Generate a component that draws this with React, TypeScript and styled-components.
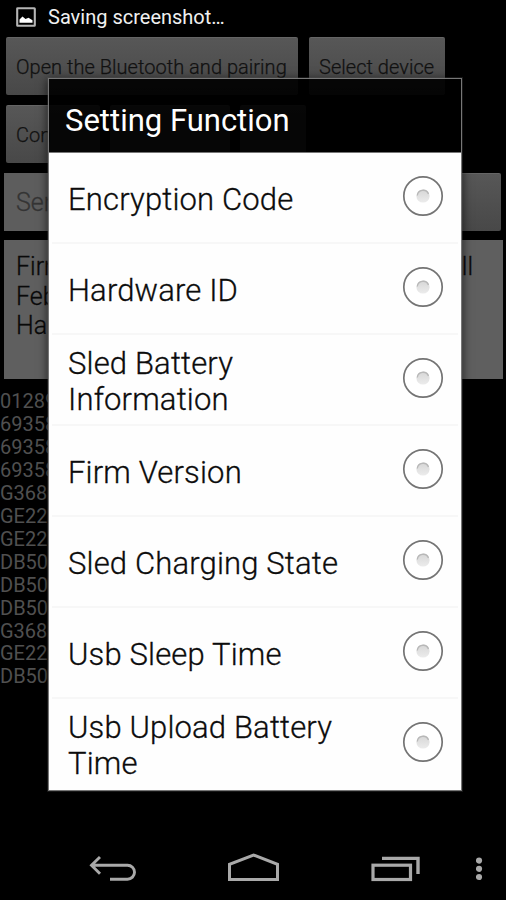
import React from "react";
import styled, { createGlobalStyle } from "styled-components";

const GlobalStyle = createGlobalStyle`
  * { box-sizing: border-box; }
  body { margin: 0; background: #000; font-family: Roboto, "Liberation Sans", sans-serif; }
`;

const Screen = styled.div`
  position: relative;
  width: 506px;
  height: 900px;
  overflow: hidden;
  background: #000;
  display: flex;
  flex-direction: column;
`;

const StatusBar = styled.header`
  height: 37px;
  flex: none;
  display: flex;
  align-items: center;
  gap: 12px;
  padding: 0 0 3px 16px;
  color: #f0f0f0;
  font-size: 20px;
`;

const Page = styled.main`
  flex: 1;
  display: flex;
  flex-direction: column;
`;

const ButtonRow = styled.div<{ $height: number; $left: number; $gap: number; $below: number }>`
  display: flex;
  flex: none;
  height: ${(p) => p.$height}px;
  gap: ${(p) => p.$gap}px;
  margin-bottom: ${(p) => p.$below}px;
  padding-left: ${(p) => p.$left}px;
`;

const GreyButton = styled.div<{ $width: number }>`
  width: ${(p) => p.$width}px;
  height: 58px;
  flex: none;
  display: flex;
  align-items: center;
  padding: 0 0 0 10px;
  border-top: 1px solid #656565;
  border-radius: 2px;
  background: linear-gradient(#575757, #484848);
  color: #121212;
  font-size: 20px;
  letter-spacing: 0.03px;
  font-weight: 300;
  -webkit-text-stroke: 0.25px #121212;
  white-space: nowrap;
  overflow: hidden;
`;

const SendField = styled.div`
  width: 360px;
  height: 58px;
  flex: none;
  padding: 15px 0 0 12px;
  background: #5d5d5d;
  color: #343434;
  font-size: 25px;
  line-height: 29px;
  font-weight: 300;
  -webkit-text-stroke: 0.3px #343434;
`;

const Output = styled.div`
  flex: none;
  width: 499px;
  height: 139px;
  margin-left: 4px;
  padding: 12px 30px 0 12px;
  background: #5f5f5f;
  color: #090909;
  font-size: 25px;
  line-height: 29.6px;
  font-weight: 300;
  -webkit-text-stroke: 0.3px #090909;
`;

const OutputLine = styled.div`
  display: flex;
  justify-content: space-between;
`;

const ScanList = styled.ul`
  list-style: none;
  margin: 11px 0 0;
  padding: 0;
  color: #505050;
  font-size: 20px;
  line-height: 22.95px;
  font-weight: 400;
`;

const Dialog = styled.section`
  position: absolute;
  left: 48px;
  top: 78px;
  width: 414px;
  height: 713px;
  display: flex;
  flex-direction: column;
  border: 1px solid #777;
  outline: 1px solid rgba(90, 90, 90, 0.25);
  box-shadow: 0 2px 9px 1px rgba(0, 0, 0, 0.6);
`;

const DialogTitle = styled.h1`
  margin: 0;
  height: 74px;
  flex: none;
  display: flex;
  align-items: center;
  padding: 10px 0 0 16px;
  border-bottom: 1px solid #777;
  background: rgba(0, 0, 0, 0.92);
  color: #fff;
  font-size: 31px;
  font-weight: 400;
`;

const Options = styled.div`
  flex: 1;
  background: #fefefe;
`;

const Option = styled.div`
  height: 91px;
  margin: 0 3px;
  padding: 0 14px 0 16px;
  display: flex;
  align-items: center;
  justify-content: space-between;
  border-bottom: 2px solid #f7f7f7;
  &:last-child { border-bottom: 0; height: 89px; }
`;

const Label = styled.span`
  width: 300px;
  padding-top: 5px;
  color: #0c0c0c;
  font-size: 31px;
  letter-spacing: 0.16px;
  line-height: 36px;
  font-weight: 300;
  -webkit-text-stroke: 0.3px #0c0c0c;
`;

const Radio = styled.svg`
  flex: none;
  display: block;
  margin-bottom: 3px;
`;

const NavBar = styled.nav`
  position: absolute;
  left: 0;
  bottom: 0;
  width: 506px;
  height: 62px;
  display: flex;
  align-items: center;
  padding-left: 88px;
`;

const NavIcon = styled.svg<{ $after: number }>`
  flex: none;
  display: block;
  margin-right: ${(p) => p.$after}px;
`;

const options = [
  "Encryption Code", "Hardware ID", "Sled Battery Information", "Firm Version",
  "Sled Charging State", "Usb Sleep Time", "Usb Upload Battery Time",
];

const scans = [
  "01289", "69358", "69358", "69358", "G368", "GE22", "GE22",
  "DB50", "DB50", "DB50", "G368", "GE22", "DB50",
];

function RadioMark() {
  return (
    <Radio width="42" height="42" viewBox="0 0 42 42">
      <defs>
        <linearGradient id="dot" x1="0" y1="0" x2="0" y2="1">
          <stop offset="0" stopColor="#d6d6d6" />
          <stop offset="1" stopColor="#ececec" />
        </linearGradient>
      </defs>
      <circle cx="21" cy="21" r="19.2" fill="#fff" stroke="#747474" strokeWidth="1.7" />
      <circle cx="21" cy="21" r="6.6" fill="url(#dot)" />
      <path d="M15.3 20.5A5.8 5.8 0 0 1 26.5 19" fill="none" stroke="#b8b8b8" strokeWidth="1.3" />
    </Radio>
  );
}

export default function App() {
  return (
    <Screen>
      <GlobalStyle />
      <StatusBar>
        <svg width="20" height="20" viewBox="0 0 20 20">
          <rect x="1.2" y="1.2" width="17.6" height="17.6" rx="0.5" fill="none" stroke="#b5b5b5" strokeWidth="2.1" />
          <path d="M3.5 15.8V12.5L6.5 9.5L9.5 12L12.5 10.7L16.5 13.2V15.8Z" fill="#fff" />
        </svg>
        <span>Saving screenshot…</span>
      </StatusBar>
      <Page>
        <ButtonRow $height={58} $left={6} $gap={11} $below={10}>
          <GreyButton $width={292}>Open the Bluetooth and pairing</GreyButton>
          <GreyButton $width={136}>Select device</GreyButton>
        </ButtonRow>
        <ButtonRow $height={58} $left={6} $gap={10} $below={10}>
          <GreyButton $width={94}>Con</GreyButton>
          <GreyButton $width={120} />
          <GreyButton $width={66} />
        </ButtonRow>
        <ButtonRow $height={57} $left={4} $gap={6} $below={10}>
          <SendField>Sen</SendField>
          <GreyButton $width={131} />
        </ButtonRow>
        <Output>
          <OutputLine><span>Firm</span><span>ll</span></OutputLine>
          <OutputLine>Feb</OutputLine>
          <OutputLine>Har</OutputLine>
        </Output>
        <ScanList>
          {scans.map((code, i) => <li key={i}>{code}</li>)}
        </ScanList>
      </Page>
      <Dialog>
        <DialogTitle>Setting Function</DialogTitle>
        <Options>
          {options.map((label) => (
            <Option key={label}>
              <Label>{label}</Label>
              <RadioMark />
            </Option>
          ))}
        </Options>
      </Dialog>
      <NavBar>
        <NavIcon $after={90} width="48" height="34" viewBox="0 0 48 34">
          <path d="M12 5L3.5 13.2L12 21.7M3.5 13.2H39.5A7 7 0 0 1 39.5 27.2H22" fill="none" stroke="#a9a9a9" strokeWidth="2.9" />
        </NavIcon>
        <NavIcon $after={91} width="54" height="34" viewBox="0 0 54 34">
          <path d="M3.5 27.5V12.3L27.5 3L51.5 12.3V27.5Z" fill="none" stroke="#a9a9a9" strokeWidth="3" />
        </NavIcon>
        <NavIcon $after={55} width="50" height="34" viewBox="0 0 50 34">
          <rect x="2" y="13.2" width="37.5" height="14.3" fill="none" stroke="#a9a9a9" strokeWidth="3.2" />
          <path d="M11 6.4H47V22" fill="none" stroke="#a9a9a9" strokeWidth="3.4" />
        </NavIcon>
        <NavIcon $after={0} width="8" height="34" viewBox="0 0 8 34">
          <g fill="#a9a9a9">
            <circle cx="3" cy="8.6" r="3.1" />
            <circle cx="3" cy="16.8" r="3.1" />
            <circle cx="3" cy="25" r="3.1" />
          </g>
        </NavIcon>
      </NavBar>
    </Screen>
  );
}
